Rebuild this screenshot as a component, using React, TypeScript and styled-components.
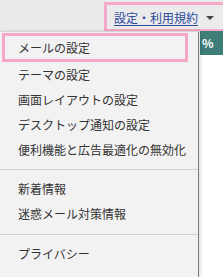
import React from 'react';
import styled, { createGlobalStyle } from 'styled-components';

const GlobalStyle = createGlobalStyle`
    html, body {
        margin: 0;
        padding: 0;
        background: #ffffff;
        font-family: "Noto Sans CJK JP", "Noto Sans", sans-serif;
    }
`;

const Colors = {
    pink: '#f5a8c8',
    bar: '#ebebeb',
    menu: '#f2f2f2',
    text: '#333333',
    link: '#2b4a9b',
    teal: '#3f7e78',
};

const groups = [
    ['メールの設定', 'テーマの設定', '画面レイアウトの設定', 'デスクトップ通知の設定', '便利機能と広告最適化の無効化'],
    ['新着情報', '迷惑メール対策情報'],
    ['プライバシー'],
];

export default function App() {
    return (
        <Page>
            <GlobalStyle />
            <TopBar>
                <Trigger>
                    <TriggerLink>設定・利用規約</TriggerLink>
                    <Caret />
                </Trigger>
            </TopBar>
            <Body>
                <Menu>
                    {groups.map((items, g) => (
                        <Group key={g} first={g === 0}>
                            {items.map((label, i) => (
                                <Item key={label} focused={g === 0 && i === 0}>
                                    {label}
                                </Item>
                            ))}
                        </Group>
                    ))}
                </Menu>
                <Side>
                    <Cell>%</Cell>
                </Side>
            </Body>
        </Page>
    );
}

const Page = styled.div`
    width: 223px;
    height: 277px;
    overflow: hidden;
    display: flex;
    flex-direction: column;
`;

const TopBar = styled.div`
    height: 31px;
    flex: none;
    background: ${Colors.bar};
    display: flex;
    justify-content: flex-end;
    align-items: flex-end;
`;

const Trigger = styled.div`
    height: 29px;
    box-sizing: border-box;
    border: 3px solid ${Colors.pink};
    border-right: 0;
    border-bottom-width: 2px;
    padding: 0 6px 0 7px;
    width: 119px;
    display: flex;
    align-items: center;
    gap: 8px;
`;

const TriggerLink = styled.a`
    font-size: 12px;
    color: ${Colors.link};
    text-decoration: underline;
    text-underline-offset: 2px;
    cursor: pointer;
`;

const Caret = styled.span`
    width: 0;
    height: 0;
    border-left: 4px solid transparent;
    border-right: 4px solid transparent;
    border-top: 4px solid #444;
    margin-top: 2px;
`;

const Body = styled.div`
    flex: 1;
    display: flex;
`;

const Menu = styled.div`
    width: 199px;
    flex: none;
    box-sizing: border-box;
    background: ${Colors.menu};
    border-top: 1px solid #d6d6d6;
    border-right: 1px solid #7c7c7c;
    box-shadow: 2px 0 3px rgba(0, 0, 0, 0.12);
    position: relative;
    z-index: 1;
`;

const Group = styled.div<{ first?: boolean }>`
    padding: ${p => (p.first ? '1px 0 7px' : '6px 0 8px')};
    border-top: ${p => (p.first ? 'none' : '1px solid #cfcfcf')};
`;

const Item = styled.div<{ focused?: boolean }>`
    font-size: 12px;
    color: ${Colors.text};
    white-space: nowrap;
    height: ${p => (p.focused ? '29px' : '25px')};
    line-height: ${p => (p.focused ? '23px' : '25px')};
    box-sizing: border-box;
    padding-left: ${p => (p.focused ? '13px' : '18px')};
    width: ${p => (p.focused ? '186px' : 'auto')};
    margin-left: ${p => (p.focused ? '2px' : '0')};
    border: ${p => (p.focused ? `3px solid ${Colors.pink}` : 'none')};
`;

const Side = styled.div`
    flex: 1;
    background: #ffffff;
`;

const Cell = styled.div`
    height: 24px;
    margin-left: 1px;
    background: ${Colors.teal};
    color: #ffffff;
    font-size: 12px;
    font-weight: bold;
    line-height: 24px;
    padding-left: 2px;
`;
